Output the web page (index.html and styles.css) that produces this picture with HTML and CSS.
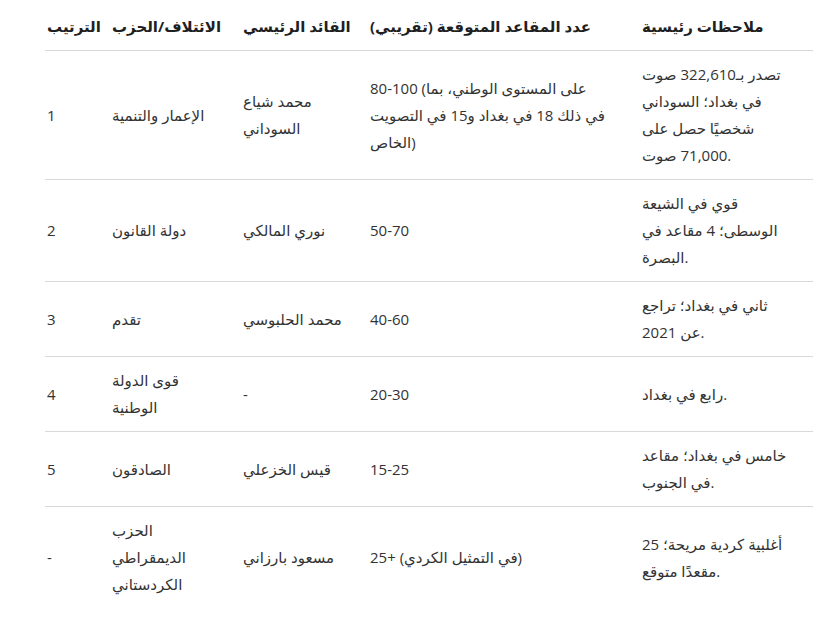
FILE: index.html
```html
<!DOCTYPE html>
<html lang="ar">
<head>
<meta charset="utf-8">
<link rel="stylesheet" href="styles.css">
</head>
<body>
<div class="wrap">
<table class="seats">
<colgroup>
<col class="c-rank"><col class="c-party"><col class="c-leader"><col class="c-seats"><col class="c-notes">
</colgroup>
<thead>
<tr>
<th>الترتيب</th>
<th>الائتلاف/الحزب</th>
<th>القائد الرئيسي</th>
<th>عدد المقاعد المتوقعة (تقريبي)</th>
<th>ملاحظات رئيسية</th>
</tr>
</thead>
<tbody>
<tr>
<td>1</td>
<td>الإعمار والتنمية</td>
<td>محمد شياع السوداني</td>
<td class="seats-cell">80-100 (على المستوى الوطني، بما في ذلك 18 في بغداد و15 في التصويت الخاص)</td>
<td class="notes-cell">تصدر بـ322,610 صوت في بغداد؛ السوداني شخصيًا حصل على 71,000 صوت.</td>
</tr>
<tr>
<td>2</td>
<td>دولة القانون</td>
<td>نوري المالكي</td>
<td class="seats-cell">50-70</td>
<td class="notes-cell">قوي في الشيعة الوسطى؛ 4 مقاعد في البصرة.</td>
</tr>
<tr>
<td>3</td>
<td>تقدم</td>
<td>محمد الحلبوسي</td>
<td class="seats-cell">40-60</td>
<td class="notes-cell">ثاني في بغداد؛ تراجع عن 2021.</td>
</tr>
<tr>
<td>4</td>
<td>قوى الدولة الوطنية</td>
<td>-</td>
<td class="seats-cell">20-30</td>
<td class="notes-cell">رابع في بغداد.</td>
</tr>
<tr>
<td>5</td>
<td>الصادقون</td>
<td>قيس الخزعلي</td>
<td class="seats-cell">15-25</td>
<td class="notes-cell">خامس في بغداد؛ مقاعد في الجنوب.</td>
</tr>
<tr>
<td>-</td>
<td>الحزب الديمقراطي الكردستاني</td>
<td>مسعود بارزاني</td>
<td class="seats-cell">25+ (في التمثيل الكردي)</td>
<td class="notes-cell">أغلبية كردية مريحة؛ 25 مقعدًا متوقع.</td>
</tr>
</tbody>
</table>
</div>
</body>
</html>
```
FILE: styles.css
```css
html, body {
  margin: 0;
  padding: 0;
  background: #ffffff;
}
.wrap {
  padding: 3px 0 0 45px;
}
.seats {
  width: 768px;
  table-layout: fixed;
  border-collapse: collapse;
  font-family: "Open Sans", "DejaVu Sans", sans-serif;
  font-size: 15px;
  line-height: 27px;
  color: #333333;
}
.c-rank { width: 65px; }
.c-party { width: 131px; }
.c-leader { width: 127px; }
.c-seats { width: 272px; }
.c-notes { width: 173px; }
.seats th,
.seats td {
  direction: ltr;
  text-align: left;
  vertical-align: middle;
  padding: 10px 14px 10px 2px;
}
.seats td.seats-cell {
  padding-right: 35px;
}
.seats td.notes-cell {
  padding-right: 25px;
}
.seats th {
  font-weight: bold;
  color: #1f1f1f;
  border-bottom: 1px solid #d9d9d9;
}
.seats tbody tr + tr td {
  border-top: 1px solid #d9d9d9;
}
```
